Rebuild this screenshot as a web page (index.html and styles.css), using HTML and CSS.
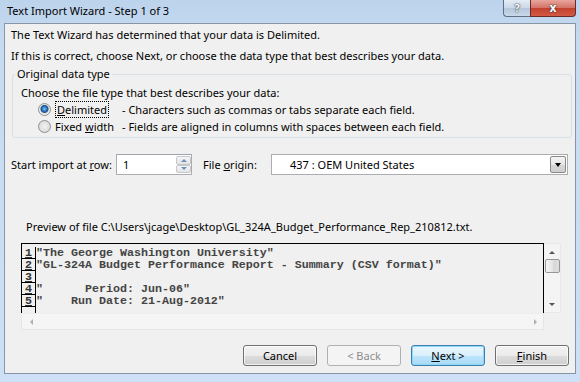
FILE: index.html
```html
<!DOCTYPE html>
<html lang="en">
<head>
    <meta charset="UTF-8">
    <meta name="viewport" content="width=device-width, initial-scale=1.0">
    <title>Text Import Wizard - Step 1 of 3</title>
    <link rel="stylesheet" href="styles.css">
</head>
<body>
    <div class="window">
        <div class="titlebar">
            <span class="title">Text Import Wizard - Step 1 of 3</span>
            <div class="caption-buttons">
                <div class="cap-btn cap-help">?</div>
                <div class="cap-btn cap-close">x</div>
            </div>
        </div>

        <div class="client">
            <p class="intro">The Text Wizard has determined that your data is Delimited.</p>
            <p class="intro second">If this is correct, choose Next, or choose the data type that best describes your data.</p>

            <fieldset class="group">
                <legend>Original data type</legend>
                <p class="group-hint">Choose the file type that best describes your data:</p>
                <div class="option">
                    <span class="radio checked"></span>
                    <span class="option-label"><span class="focus"><u>D</u>elimited</span></span>
                    <span class="option-desc">- Characters such as commas or tabs separate each field.</span>
                </div>
                <div class="option">
                    <span class="radio"></span>
                    <span class="option-label">Fixed <u>w</u>idth</span>
                    <span class="option-desc">- Fields are aligned in columns with spaces between each field.</span>
                </div>
            </fieldset>

            <div class="import-row">
                <span class="row-label">Start import at <u>r</u>ow:</span>
                <div class="spin">
                    <span class="spin-value">1</span>
                    <span class="spin-btns">
                        <span class="spin-btn"><span class="tri-up"></span></span>
                        <span class="spin-btn"><span class="tri-down"></span></span>
                    </span>
                </div>
                <span class="origin-label">File <u>o</u>rigin:</span>
                <div class="combo">
                    <span class="combo-value">437 : OEM United States</span>
                    <span class="combo-btn"><span class="tri-down dark"></span></span>
                </div>
            </div>

            <p class="preview-label">Preview of file C:\Users\jcage\Desktop\GL_324A_Budget_Performance_Rep_210812.txt.</p>

            <div class="preview">
                <div class="preview-text">
                    <div class="line"><span class="num">1</span><span class="txt">"The George Washington University"</span></div>
                    <div class="line"><span class="num">2</span><span class="txt">"GL-324A Budget Performance Report - Summary (CSV format)"</span></div>
                    <div class="line"><span class="num">3</span><span class="txt"></span></div>
                    <div class="line"><span class="num">4</span><span class="txt">"      Period: Jun-06"</span></div>
                    <div class="line"><span class="num">5</span><span class="txt">"    Run Date: 21-Aug-2012"</span></div>
                    <div class="line"><span class="num"></span><span class="txt"></span></div>
                </div>
                <div class="vscroll">
                    <span class="tri-up small"></span>
                    <span class="thumb"></span>
                    <span class="vspacer"></span>
                    <span class="tri-down small"></span>
                </div>
                <div class="hscroll">
                    <span class="tri-left"></span>
                    <span class="tri-right"></span>
                </div>
                <div class="corner"></div>
            </div>

            <div class="buttons">
                <div class="btn">Cancel</div>
                <div class="btn disabled">&lt; Back</div>
                <div class="btn default"><u>N</u>ext &gt;</div>
                <div class="btn"><u>F</u>inish</div>
            </div>
        </div>
    </div>
</body>
</html>
```

FILE: styles.css
```css
* { box-sizing: border-box; }

body {
    margin: 0;
    width: 580px;
    height: 382px;
    overflow: hidden;
    font-family: "Noto Sans", "Open Sans", sans-serif;
    font-size: 11px;
    color: #000;
    background: linear-gradient(#bcd3ec, #c6dbf1 40px, #cde0f5);
}
p { margin: 0; }

.window {
    height: 382px;
    display: flex;
    flex-direction: column;
    padding: 0 4px 8px 4px;
}

/* title bar */
.titlebar {
    height: 23px;
    display: flex;
    align-items: flex-start;
}
.title {
    flex: 1;
    padding: 3px 0 0 3px;
    line-height: 16px;
}
.caption-buttons { display: flex; }
.cap-btn {
    height: 17px;
    border: 1px solid #5f6f83;
    border-top: none;
    color: #fff;
    font-weight: bold;
    text-align: center;
    line-height: 16px;
    text-shadow: 0 0 2px #333, 0 0 1px #333;
}
.cap-help {
    width: 27px;
    border-radius: 0 0 0 4px;
    border-right: none;
    font-size: 11px;
    background: linear-gradient(#e4ecf5, #cad8e8 50%, #b5c7dc 51%, #c9d8e9);
}
.cap-close {
    width: 46px;
    border-radius: 0 0 4px 0;
    border-color: #6b2a26;
    font-size: 12px;
    line-height: 15px;
    background: linear-gradient(#e8a69c, #d47266 50%, #c2412f 51%, #d35a44);
}

/* client area */
.client {
    flex: 1;
    background: #f0f0f0;
    border: 1px solid #8795a6;
    padding: 3px 3px 0 6px;
}
.intro { line-height: 16px; }
.intro.second { margin-top: 5px; }

.group {
    margin: 2px 0 0 1px;
    padding: 0 0 2px 8px;
    border: 1px solid #d5dfe5;
    border-radius: 3px;
}
.group legend {
    margin-left: -6px;
    padding: 0 2px;
    line-height: 16px;
}
.group-hint {
    margin-top: 3px;
    line-height: 16px;
}
.option {
    height: 17px;
    display: flex;
    align-items: center;
    white-space: nowrap;
}
.radio {
    width: 13px;
    height: 13px;
    flex: none;
    margin-left: 17px;
    border-radius: 50%;
    border: 1px solid #8e8f8f;
    background: radial-gradient(circle, #f2f2f2 0, #dcdcdc 70%);
}
.radio.checked {
    background: radial-gradient(circle at 50% 45%, #86c6f2 0, #2a6fb7 2.5px, #1d4f86 3.5px, #e2e2e2 4.5px, #f4f4f4 6px);
}
.option-label {
    width: 67px;
    flex: none;
    margin-left: 4px;
}
.focus {
    border: 1px dotted #000;
    padding: 0 1px;
}

/* start row / file origin */
.import-row {
    margin-top: 16px;
    display: flex;
    align-items: center;
    height: 21px;
    white-space: nowrap;
}
.row-label { width: 105px; flex: none; }
.spin {
    width: 76px;
    height: 21px;
    flex: none;
    display: flex;
    background: #fff;
    border: 1px solid #abadb3;
    border-top-color: #9ea2ab;
}
.spin-value {
    flex: 1;
    padding-left: 6px;
    line-height: 19px;
}
.spin-btns {
    width: 15px;
    display: flex;
    flex-direction: column;
    padding: 1px 0;
}
.spin-btn {
    flex: 1;
    display: flex;
    align-items: center;
    justify-content: center;
    background: linear-gradient(#f6f6f6, #e3e3e3);
    border: 1px solid #c4c8cc;
    border-radius: 2px;
}
.origin-label {
    width: 68px;
    flex: none;
    margin-left: 11px;
}
.combo {
    flex: 1;
    margin-right: 4px;
    height: 21px;
    display: flex;
    background: #fff;
    border: 1px solid #abadb3;
    padding: 1px;
}
.combo-value {
    flex: 1;
    padding-left: 17px;
    line-height: 17px;
}
.combo-btn {
    width: 16px;
    display: flex;
    align-items: center;
    justify-content: center;
    border: 1px solid #8a8a8a;
    border-radius: 2px;
    background: linear-gradient(#f4f4f4, #e6e6e6 50%, #d6d6d6 51%, #cfcfcf);
}

/* little triangles */
.tri-up, .tri-down, .tri-left, .tri-right {
    width: 0;
    height: 0;
    border: 3px solid transparent;
}
.tri-up { border-bottom: 3px solid #6d8fb9; border-top-width: 0; }
.tri-down { border-top: 3px solid #6d8fb9; border-bottom-width: 0; }
.tri-down.dark { border-top: 4px solid #000; border-left-width: 3.5px; border-right-width: 3.5px; }
.tri-up.small { border-bottom-color: #555; }
.tri-down.small { border-top-color: #555; }
.tri-left { border-right: 3px solid #b0b0b0; border-left-width: 0; }
.tri-right { border-left: 3px solid #b0b0b0; border-right-width: 0; }

.preview-label {
    margin: 44px 0 0 15px;
    line-height: 16px;
}

/* preview */
.preview {
    margin: 8px 0 0 10px;
    width: 540px;
    height: 87px;
    display: grid;
    grid-template-columns: 523px 17px;
    grid-template-rows: 70px 17px;
}
.preview-text {
    border: 1px solid #000;
    border-bottom: none;
    padding-top: 3px;
    overflow: hidden;
    font-family: "Liberation Mono", "Courier New", monospace;
    font-size: 11.67px;
    font-weight: bold;
    color: #444;
}
.line {
    display: flex;
    height: 12px;
    line-height: 12px;
}
.num {
    width: 14px;
    flex: none;
    border-right: 1px solid #000;
    border-bottom: 1px solid #000;
    padding-left: 3px;
    text-decoration: underline;
    color: #333;
}
.txt { white-space: pre; }

.vscroll {
    display: flex;
    flex-direction: column;
    align-items: center;
    padding: 7px 0 6px;
    background: #f4f4f4;
    border: 1px solid #e8e8e8;
    border-left: none;
}
.thumb {
    width: 15px;
    height: 14px;
    margin-top: 5px;
    border: 1px solid #979797;
    border-radius: 2px;
    background: linear-gradient(90deg, #f7f7f7, #e4e4e4 50%, #d7d7d7 51%, #dedede);
}
.vspacer { flex: 1; }

.hscroll {
    display: flex;
    align-items: center;
    justify-content: space-between;
    padding: 0 6px 0 8px;
    background: #f5f5f5;
    border: 1px solid #e6e6e6;
    border-top-color: #ededed;
}
.corner { background: #f0f0f0; }

/* dialog buttons */
.buttons {
    margin: 15px 3px 0 0;
    display: flex;
    justify-content: flex-end;
    gap: 10px;
}
.btn {
    width: 74px;
    height: 21px;
    line-height: 19px;
    text-align: center;
    border: 1px solid #707070;
    border-radius: 3px;
    background: linear-gradient(#f2f2f2, #ebebeb 50%, #dddddd 51%, #cfcfcf);
    box-shadow: inset 0 0 0 1px rgba(255, 255, 255, 0.7);
}
.btn.disabled {
    color: #8d8d8d;
    border-color: #adb2b5;
    background: #f4f4f4;
    box-shadow: none;
}
.btn.default {
    border-color: #3c7fb1;
    box-shadow: inset 0 0 0 1px #8ed7f8;
    background: linear-gradient(#eaf6fd, #d9f0fc 50%, #bee6fd 51%, #a7d9f5);
}
```
